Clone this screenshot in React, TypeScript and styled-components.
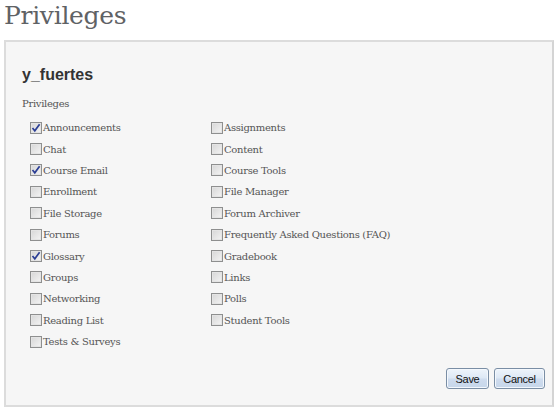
import React from "react";
import styled, { createGlobalStyle } from "styled-components";

const Global = createGlobalStyle`
  html, body { margin: 0; padding: 0; background: #ffffff; }
  body { width: 560px; height: 414px; overflow: hidden; }
`;

const Page = styled.div`
  display: flex;
  flex-direction: column;
  padding: 0 0 0 4px;
`;

const Title = styled.h1`
  margin: 0;
  padding: 1px 0 0 0;
  height: 39px;
  font-family: "DejaVu Serif", serif;
  font-weight: normal;
  font-size: 25px;
  line-height: 30px;
  color: #5f6265;
  letter-spacing: -0.3px;
`;

const Panel = styled.div`
  width: 530px;
  height: 363px;
  border: 2px solid #dcdcdc;
  border-right-color: #d4d4d4;
  background: #f6f6f6;
  padding: 0 0 0 16px;
  box-sizing: content-box;
  display: flex;
  flex-direction: column;
`;

const UserName = styled.h2`
  margin: 23px 0 0 0;
  font-family: "Liberation Sans", Arial, sans-serif;
  font-weight: bold;
  font-size: 16px;
  line-height: 20px;
  color: #333333;
`;

const SectionLabel = styled.div`
  margin-top: 12px;
  font-family: "DejaVu Serif", serif;
  font-size: 10px;
  line-height: 14px;
  color: #555555;
  letter-spacing: -0.3px;
`;

const Grid = styled.div`
  margin: 6px 0 0 8px;
  display: grid;
  grid-template-columns: 181px 200px;
  grid-auto-rows: 21.4px;
  grid-auto-flow: row;
`;

const Item = styled.label`
  display: flex;
  align-items: center;
  gap: 1px;
  font-family: "DejaVu Serif", serif;
  font-size: 10px;
  letter-spacing: -0.3px;
  color: #555555;
  white-space: nowrap;
`;

const Box = styled.span<{ $checked?: boolean }>`
  width: 12px;
  height: 12px;
  box-sizing: border-box;
  border: 1px solid #8e8f8f;
  background: linear-gradient(135deg, #d6d6d6 0%, #f4f4f4 100%);
  box-shadow: inset 0 0 0 1px #e4e4e4;
  display: flex;
  align-items: center;
  justify-content: center;
  flex: none;
`;

const Footer = styled.div`
  margin-top: auto;
  margin-bottom: 16px;
  display: flex;
  justify-content: flex-end;
  gap: 5px;
  padding-right: 7px;
`;

const Button = styled.button<{ $w: number }>`
  width: ${(p) => p.$w}px;
  height: 21px;
  padding: 0;
  border: 1px solid #7a8ea5;
  border-radius: 3px;
  background: linear-gradient(to bottom, #eef4fb 0%, #dde8f5 48%, #cfdcee 52%, #c6d6ea 100%);
  box-shadow: inset 0 0 0 1px #f4f8fd;
  font-family: "Liberation Sans", Arial, sans-serif;
  font-size: 11px;
  color: #111;
  letter-spacing: -0.3px;
`;

const Check = () => (
  <svg width="10" height="10" viewBox="0 0 10 10">
    <path d="M1.5 5 L3.8 7.8 L8.6 1.2" fill="none" stroke="#2b3e94" strokeWidth="1.7" />
  </svg>
);

const items: [string, boolean][] = [
  ["Announcements", true],
  ["Assignments", false],
  ["Chat", false],
  ["Content", false],
  ["Course Email", true],
  ["Course Tools", false],
  ["Enrollment", false],
  ["File Manager", false],
  ["File Storage", false],
  ["Forum Archiver", false],
  ["Forums", false],
  ["Frequently Asked Questions (FAQ)", false],
  ["Glossary", true],
  ["Gradebook", false],
  ["Groups", false],
  ["Links", false],
  ["Networking", false],
  ["Polls", false],
  ["Reading List", false],
  ["Student Tools", false],
  ["Tests & Surveys", false],
];

export default function App() {
  return (
    <>
      <Global />
      <Page>
        <Title>Privileges</Title>
        <Panel>
          <UserName>y_fuertes</UserName>
          <SectionLabel>Privileges</SectionLabel>
          <Grid>
            {items.map(([name, checked]) => (
              <Item key={name}>
                <Box $checked={checked}>{checked && <Check />}</Box>
                {name}
              </Item>
            ))}
          </Grid>
          <Footer>
            <Button $w={43}>Save</Button>
            <Button $w={51}>Cancel</Button>
          </Footer>
        </Panel>
      </Page>
    </>
  );
}
